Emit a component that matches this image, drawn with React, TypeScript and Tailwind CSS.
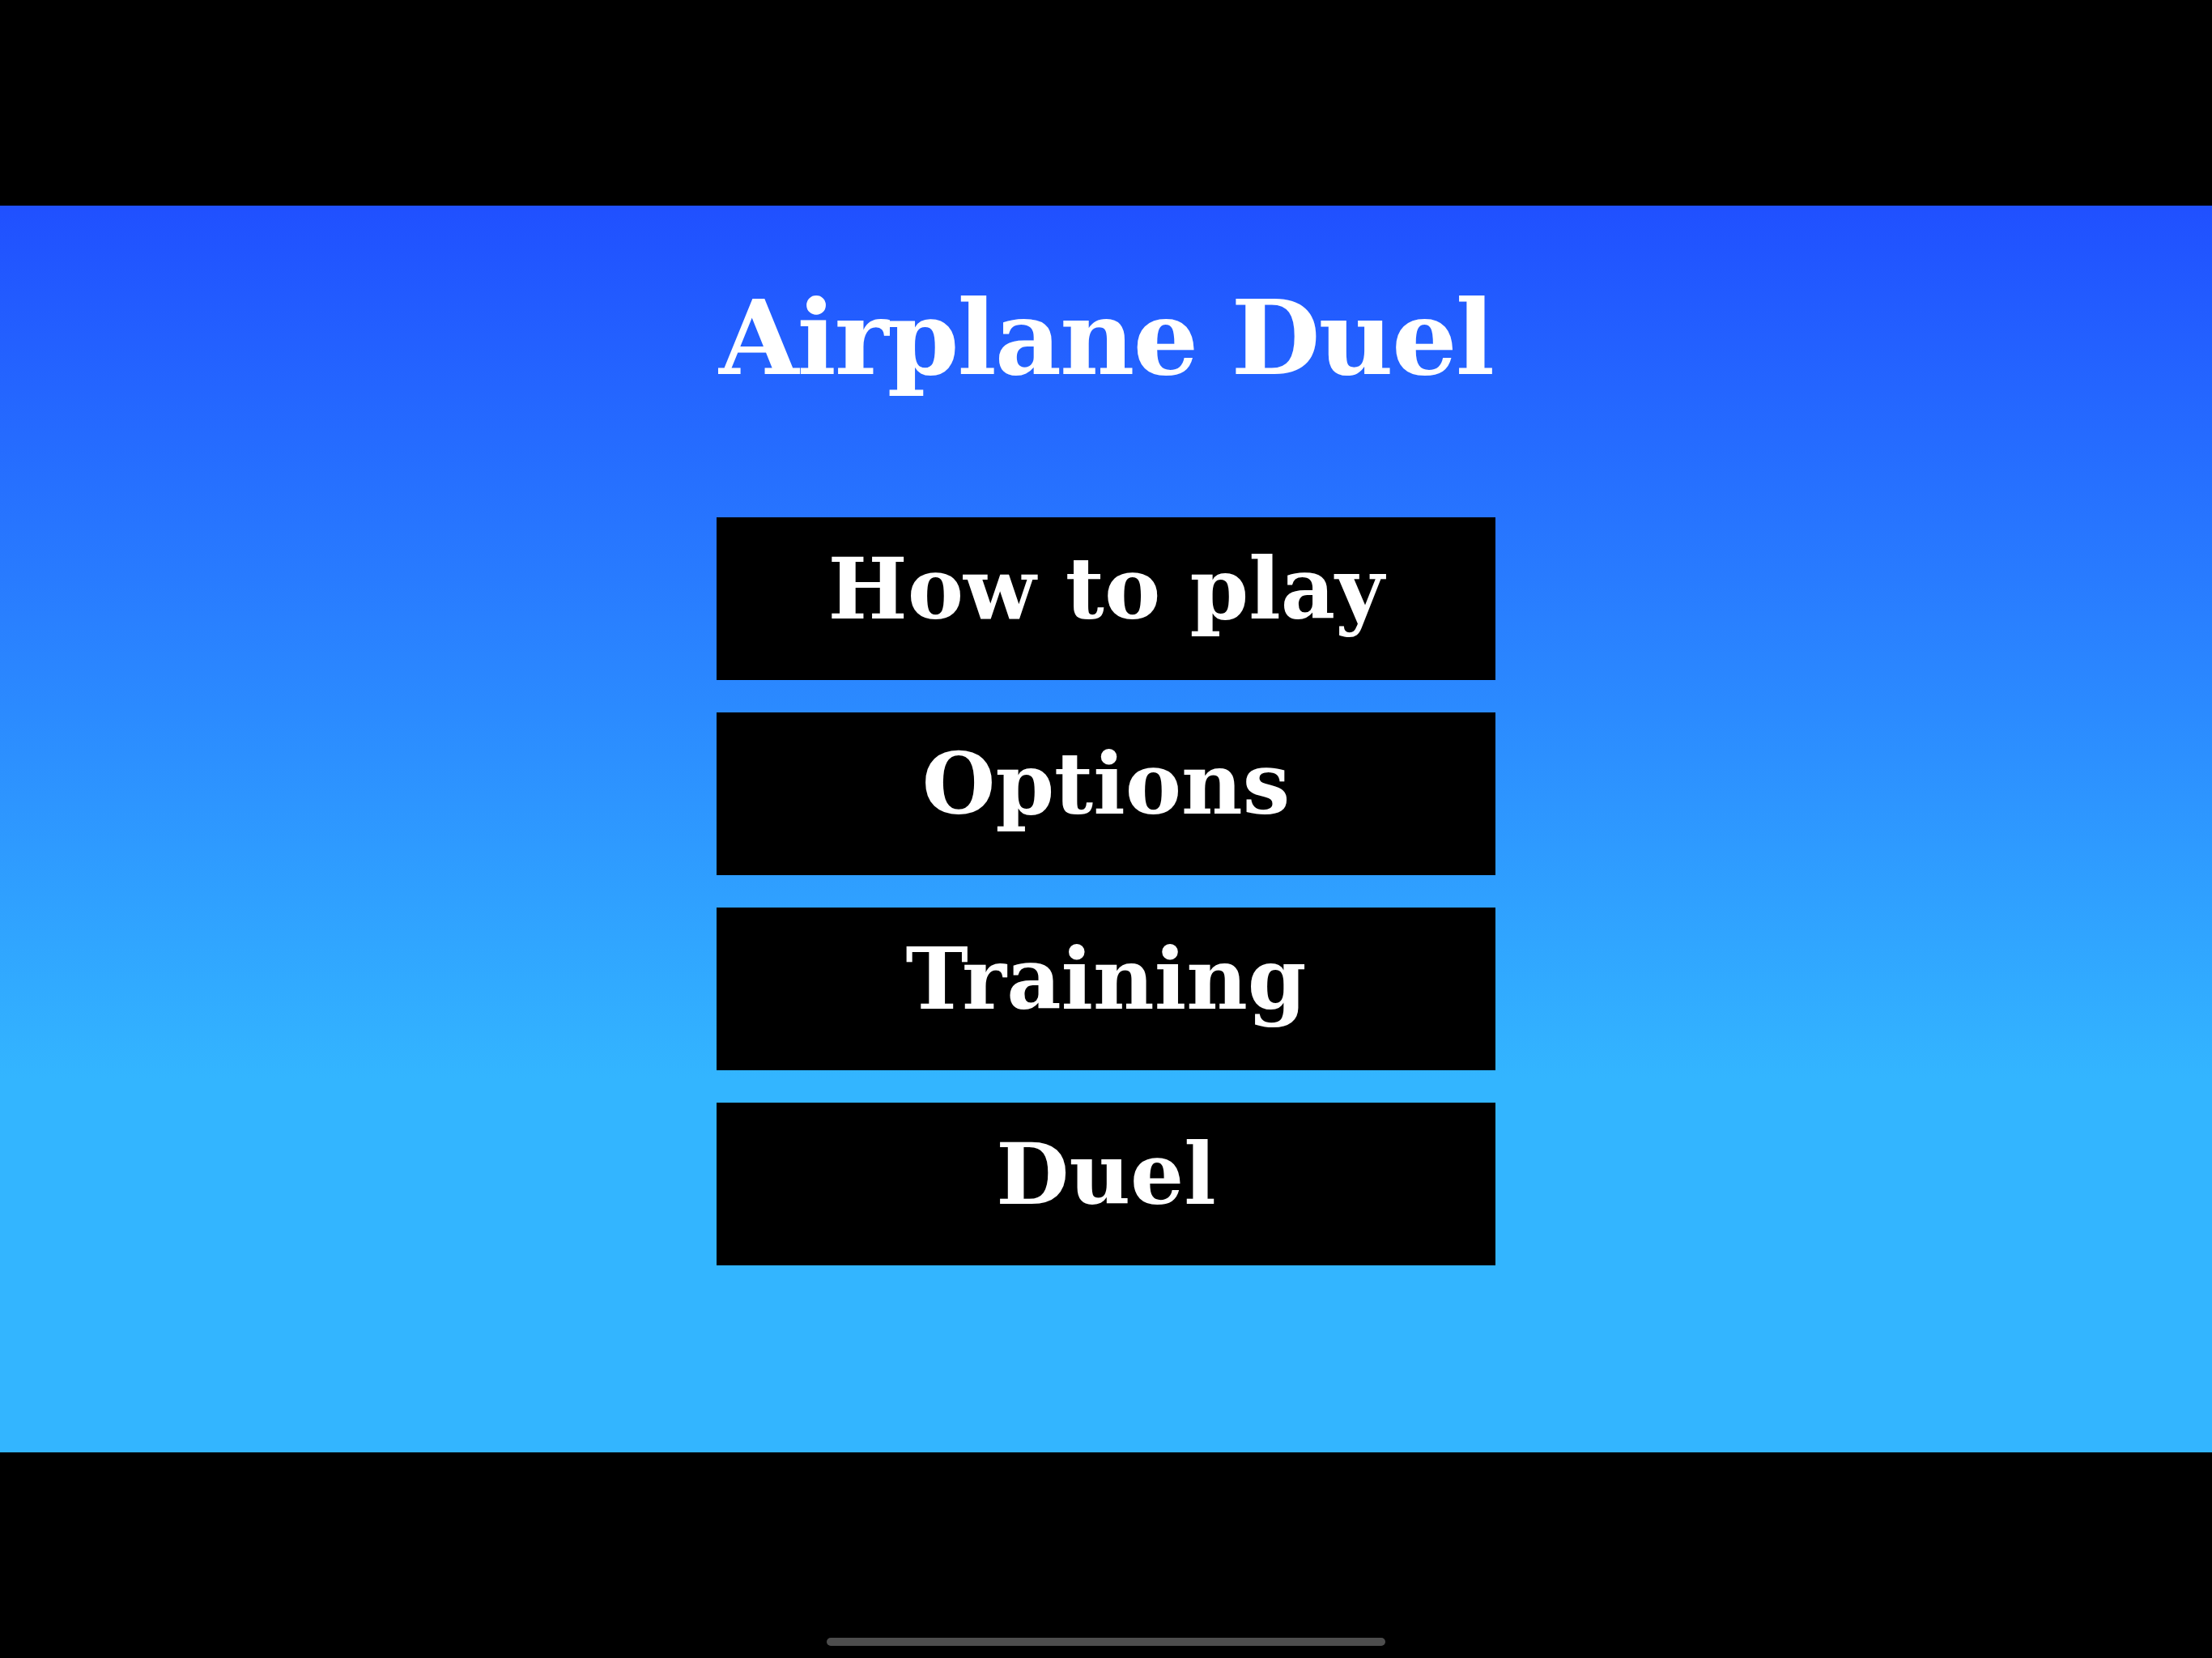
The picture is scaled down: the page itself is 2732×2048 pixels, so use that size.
const items = ["How to play", "Options", "Training", "Duel"];

export default function App() {
  return (
    <div className="flex h-[2048px] w-[2732px] flex-col bg-black" style={{ fontFamily: '"DejaVu Serif", serif' }}>
      <div className="h-[254px] shrink-0 bg-black" />
      <main className="flex h-[1540px] shrink-0 flex-col items-center bg-[linear-gradient(180deg,#2050ff_0%,#33b5ff_70%,#33b5ff_100%)]">
        <h1 className="mt-[100px] text-[127px] font-bold leading-none tracking-[-2px] text-white">Airplane Duel</h1>
        <div className="mt-[158px] flex flex-col gap-10">
          {items.map((label) => (
            <button
              key={label}
              className="flex h-[201px] w-[962px] items-center justify-center bg-black pb-6 text-[104px] font-bold leading-none text-white"
            >
              {label}
            </button>
          ))}
        </div>
      </main>
      <div className="flex flex-1 items-end justify-center pb-[15px]">
        <div className="h-[10px] w-[690px] rounded-full bg-[#4d4d4d]" />
      </div>
    </div>
  );
}
